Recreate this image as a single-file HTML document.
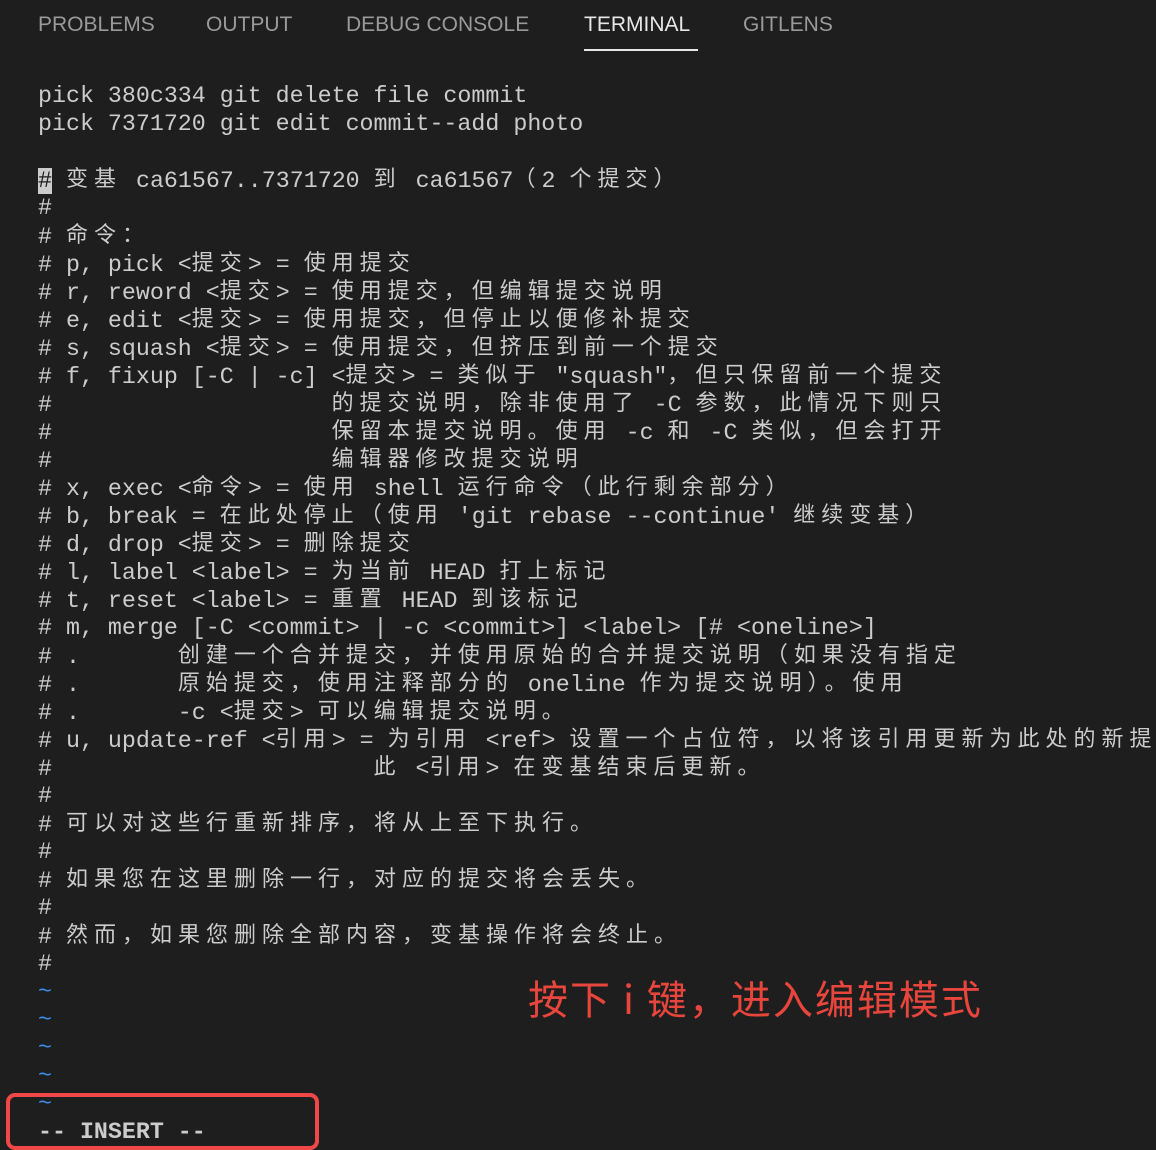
<!DOCTYPE html>
<html><head><meta charset="utf-8"><style>
html,body{margin:0;padding:0;background:#1e1e1e;width:1156px;height:1150px;overflow:hidden;position:relative}
.tabs{position:absolute;top:13px;left:0;font-family:"Liberation Sans",sans-serif;font-size:21px;color:#9a9a9a}
.tabs span{position:absolute;top:0;white-space:nowrap}
.ul{position:absolute;left:584px;top:49px;width:114px;height:2px;background:#e7e7e7}
.term{position:absolute;left:38px;top:82px;font-family:"Liberation Mono",monospace;font-size:23.3px;color:#cccccc}
.term div{height:28px;line-height:28px;white-space:pre;overflow:visible}
i{font-style:normal;font-family:"Noto Sans CJK SC",sans-serif;font-size:22px;letter-spacing:6px;line-height:1;vertical-align:1px}
.t{color:#3b8eea}
.cur{background:#cccccc;color:#1e1e1e}
.box{position:absolute;left:6px;top:1093px;width:305px;height:49px;border:4px solid #f04848;border-radius:9px}
.red{position:absolute;left:528px;top:973px;font-family:"Noto Sans CJK SC",sans-serif;font-size:40px;letter-spacing:2px;color:#e8453c;white-space:nowrap;line-height:48px}
</style></head><body>
<div class="tabs">
<span style="left:38px">PROBLEMS</span>
<span style="left:206px">OUTPUT</span>
<span style="left:346px">DEBUG CONSOLE</span>
<span style="left:584px;color:#e7e7e7">TERMINAL</span>
<span style="left:743px">GITLENS</span>
</div>
<div class="ul"></div>
<div class="term">
<div>pick 380c334 git delete file commit</div>
<div>pick 7371720 git edit commit--add photo</div>
<div> </div>
<div><span class="cur">#</span> <i>变基</i> ca61567..7371720 <i>到</i> ca61567<i>（</i>2 <i>个提交）</i></div>
<div>#</div>
<div># <i>命令：</i></div>
<div># p, pick &lt;<i>提交</i>&gt; = <i>使用提交</i></div>
<div># r, reword &lt;<i>提交</i>&gt; = <i>使用提交，但编辑提交说明</i></div>
<div># e, edit &lt;<i>提交</i>&gt; = <i>使用提交，但停止以便修补提交</i></div>
<div># s, squash &lt;<i>提交</i>&gt; = <i>使用提交，但挤压到前一个提交</i></div>
<div># f, fixup [-C | -c] &lt;<i>提交</i>&gt; = <i>类似于</i> "squash"<i>，但只保留前一个提交</i></div>
<div>#                    <i>的提交说明，除非使用了</i> -C <i>参数，此情况下则只</i></div>
<div>#                    <i>保留本提交说明。使用</i> -c <i>和</i> -C <i>类似，但会打开</i></div>
<div>#                    <i>编辑器修改提交说明</i></div>
<div># x, exec &lt;<i>命令</i>&gt; = <i>使用</i> shell <i>运行命令（此行剩余部分）</i></div>
<div># b, break = <i>在此处停止（使用</i> 'git rebase --continue' <i>继续变基）</i></div>
<div># d, drop &lt;<i>提交</i>&gt; = <i>删除提交</i></div>
<div># l, label &lt;label&gt; = <i>为当前</i> HEAD <i>打上标记</i></div>
<div># t, reset &lt;label&gt; = <i>重置</i> HEAD <i>到该标记</i></div>
<div># m, merge [-C &lt;commit&gt; | -c &lt;commit&gt;] &lt;label&gt; [# &lt;oneline&gt;]</div>
<div># .       <i>创建一个合并提交，并使用原始的合并提交说明（如果没有指定</i></div>
<div># .       <i>原始提交，使用注释部分的</i> oneline <i>作为提交说明）。使用</i></div>
<div># .       -c &lt;<i>提交</i>&gt; <i>可以编辑提交说明。</i></div>
<div># u, update-ref &lt;<i>引用</i>&gt; = <i>为引用</i> &lt;ref&gt; <i>设置一个占位符，以将该引用更新为此处的新提</i></div>
<div>#                       <i>此</i> &lt;<i>引用</i>&gt; <i>在变基结束后更新。</i></div>
<div>#</div>
<div># <i>可以对这些行重新排序，将从上至下执行。</i></div>
<div>#</div>
<div># <i>如果您在这里删除一行，对应的提交将会丢失。</i></div>
<div>#</div>
<div># <i>然而，如果您删除全部内容，变基操作将会终止。</i></div>
<div>#</div>
<div class="t">~</div>
<div class="t">~</div>
<div class="t">~</div>
<div class="t">~</div>
<div class="t">~</div>
<div style="font-weight:bold">-- INSERT --</div>
</div>
<div class="box"></div>
<div class="red">按下 i 键，进入编辑模式</div>
</body></html>
